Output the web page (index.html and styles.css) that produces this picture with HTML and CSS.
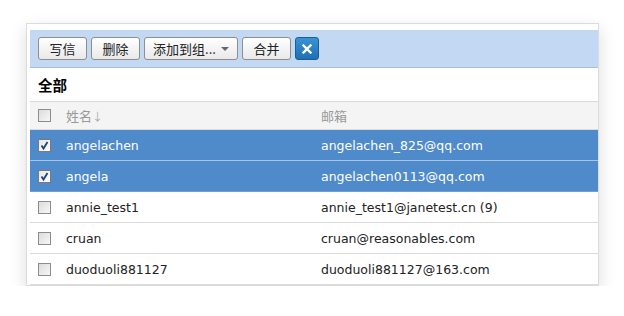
FILE: index.html
```html
<!DOCTYPE html>
<html lang="zh">
<head>
<meta charset="utf-8">
<link rel="stylesheet" href="styles.css">
</head>
<body>
<div class="wrap">
  <div class="panel">
    <div class="toolbar">
      <button class="btn">写信</button>
      <button class="btn">删除</button>
      <button class="btn btn-drop">添加到组... <span class="caret"></span></button>
      <button class="btn">合并</button>
      <button class="btn btn-close"><svg width="10" height="10" viewBox="0 0 10 10"><path d="M1.5 1.5 L8.5 8.5 M8.5 1.5 L1.5 8.5" stroke="#fff" stroke-width="2.4" stroke-linecap="square"/></svg></button>
    </div>
    <div class="title">全部</div>
    <div class="row head">
      <span class="cb"></span>
      <span class="name">姓名<span class="arrow">↓</span></span>
      <span class="mail">邮箱</span>
    </div>
    <div class="row sel">
      <span class="cb on"><svg width="11" height="11" viewBox="0 0 11 11"><path d="M2.5 5.5 L4.5 8.5 L8.5 2" stroke="#1e3f8a" stroke-width="1.8" fill="none"/></svg></span>
      <span class="name">angelachen</span>
      <span class="mail">angelachen_825@qq.com</span>
    </div>
    <div class="row sel last-sel">
      <span class="cb on"><svg width="11" height="11" viewBox="0 0 11 11"><path d="M2.5 5.5 L4.5 8.5 L8.5 2" stroke="#1e3f8a" stroke-width="1.8" fill="none"/></svg></span>
      <span class="name">angela</span>
      <span class="mail">angelachen0113@qq.com</span>
    </div>
    <div class="row">
      <span class="cb"></span>
      <span class="name">annie_test1</span>
      <span class="mail">annie_test1@janetest.cn (9)</span>
    </div>
    <div class="row">
      <span class="cb"></span>
      <span class="name">cruan</span>
      <span class="mail">cruan@reasonables.com</span>
    </div>
    <div class="row">
      <span class="cb"></span>
      <span class="name">duoduoli881127</span>
      <span class="mail">duoduoli881127@163.com</span>
    </div>
  </div>
</div>
</body>
</html>
```

FILE: styles.css
```css
* { box-sizing: border-box; }
html, body { margin: 0; padding: 0; background: #fff; }
body {
  font-family: "DejaVu Sans", "Noto Sans CJK SC", sans-serif;
  font-size: 12.5px;
  color: #222;
}
.wrap { padding: 23px 0 0 26px; }
.panel {
  width: 573px;
  height: 263px;
  border: 1px solid #dcdcdc;
  background: #fff;
  padding: 6px 0 0 3px;
  box-shadow: 0 6px 16px rgba(0,0,0,0.14);
}
.toolbar {
  height: 38px;
  background: #c3d9f3;
  border-bottom: 1px solid #a9c0dc;
  display: flex;
  align-items: flex-start;
  gap: 4px;
  padding: 7px 0 0 8px;
}
.btn {
  height: 23px;
  border: 1px solid #8e8e8e;
  border-radius: 3px;
  background: linear-gradient(#ffffff, #e9e9e9);
  font-family: "Noto Sans CJK SC", sans-serif;
  font-size: 13px;
  color: #222;
  padding: 0;
  width: 49px;
  display: flex;
  align-items: center;
  justify-content: center;
  line-height: 1;
}
.btn-drop { width: 94px; gap: 5px; }
.caret {
  width: 0; height: 0;
  border-left: 4px solid transparent;
  border-right: 4px solid transparent;
  border-top: 4px solid #666;
}
.btn-close {
  width: 24px;
  background: linear-gradient(#3a92d6, #1f6fb5);
  border-color: #1b5d98;
}
.title {
  height: 34px;
  border-bottom: 1px solid #d9d9d9;
  padding-left: 8px;
  display: flex;
  align-items: center;
  font-family: "Noto Sans CJK SC", sans-serif;
  font-weight: bold;
  font-size: 14.5px;
  color: #000;
}
.row {
  height: 31px;
  display: grid;
  grid-template-columns: 28px 255px 1fr;
  align-items: center;
  padding-left: 8px;
  border-bottom: 1px solid #dadada;
}
.row.head {
  height: 28px;
  background: #f4f4f4;
  border-bottom: 1px solid #dcdcdc;
  color: #999;
  font-family: "Noto Sans CJK SC", sans-serif;
  font-size: 13px;
}
.arrow { color: #aaa; font-size: 11px; }
.row.sel {
  background: #4f8acb;
  color: #fff;
  border-bottom: 1px solid #a7c4e6;
}
.row.last-sel { border-bottom: 1px solid #6f9fd6; }
.cb {
  width: 13px; height: 13px;
  border: 1px solid #8c8c8c;
  background: linear-gradient(135deg, #dcdcdc, #f7f7f7);
  display: flex;
  align-items: center;
  justify-content: center;
}
.cb.on { background: linear-gradient(135deg, #e6e6e6, #ffffff); border-color: #7a7a7a; }
.name, .mail { white-space: nowrap; }
```
